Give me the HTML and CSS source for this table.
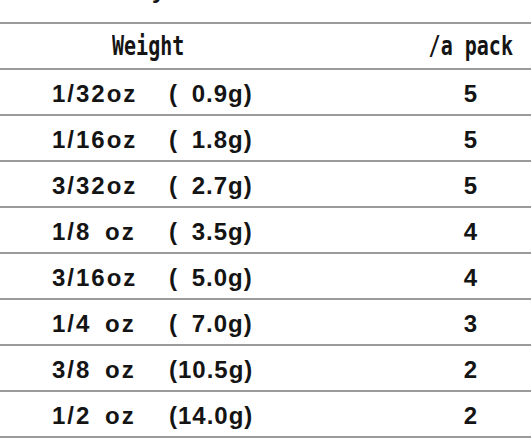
FILE: index.html
```
<!DOCTYPE html>
<html>
<head>
<meta charset="utf-8">
<link rel="stylesheet" href="styles.css">
</head>
<body>
<div class="caption"><div class="caption-text">y</div></div>
<div class="table">
  <div class="row head">
    <div class="c1"><span class="ht ht-left">Weight</span></div>
    <div class="c2"><span class="ht ht-center">/a pack</span></div>
  </div>
  <div class="row"><div class="c1"><span class="oz">1/32oz</span><span class="g">( 0.9g)</span></div><div class="c2">5</div></div>
  <div class="row"><div class="c1"><span class="oz">1/16oz</span><span class="g">( 1.8g)</span></div><div class="c2">5</div></div>
  <div class="row"><div class="c1"><span class="oz">3/32oz</span><span class="g">( 2.7g)</span></div><div class="c2">5</div></div>
  <div class="row"><div class="c1"><span class="oz">1/8 oz</span><span class="g">( 3.5g)</span></div><div class="c2">4</div></div>
  <div class="row"><div class="c1"><span class="oz">3/16oz</span><span class="g">( 5.0g)</span></div><div class="c2">4</div></div>
  <div class="row"><div class="c1"><span class="oz">1/4 oz</span><span class="g">( 7.0g)</span></div><div class="c2">3</div></div>
  <div class="row"><div class="c1"><span class="oz">3/8 oz</span><span class="g">(10.5g)</span></div><div class="c2">2</div></div>
  <div class="row"><div class="c1"><span class="oz">1/2 oz</span><span class="g">(14.0g)</span></div><div class="c2">2</div></div>
</div>
</body>
</html>
```
FILE: styles.css
```
html, body {
  margin: 0;
  padding: 0;
  background: #ffffff;
}
body {
  font-family: "Liberation Sans", Arial, sans-serif;
  font-weight: bold;
  font-size: 24px;
  color: #141414;
  width: 531px;
  overflow: hidden;
}
.caption {
  height: 22px;
  overflow: hidden;
}
.caption-text {
  margin-top: -22px;
  line-height: 24px;
  padding-left: 152px;
}
.table {
  border-top: 2px solid #9a9a9a;
}
.row {
  display: grid;
  grid-template-columns: 410px 1fr;
  border-bottom: 2px solid #9a9a9a;
  padding-top: 4px;
  line-height: 40px;
  height: 40px;
  white-space: pre;
}
.c1 {
  padding-left: 52px;
  display: flex;
}
.c2 {
  text-align: center;
}
.oz {
  display: inline-block;
  width: 117px;
  letter-spacing: 2px;
  word-spacing: 5px;
}
.g {
  display: inline-block;
  letter-spacing: 1px;
  word-spacing: 6px;
}
.head {
  padding-top: 0;
  height: 44px;
  line-height: 44px;
}
.head .c1 {
  padding-left: 112px;
}
.ht {
  display: inline-block;
  font-family: "DejaVu Sans Mono", "Liberation Mono", monospace;
  font-size: 26px;
  transform: scaleX(0.77);
}
.ht-left {
  transform-origin: left center;
}
.ht-center {
  transform-origin: center center;
}
```
